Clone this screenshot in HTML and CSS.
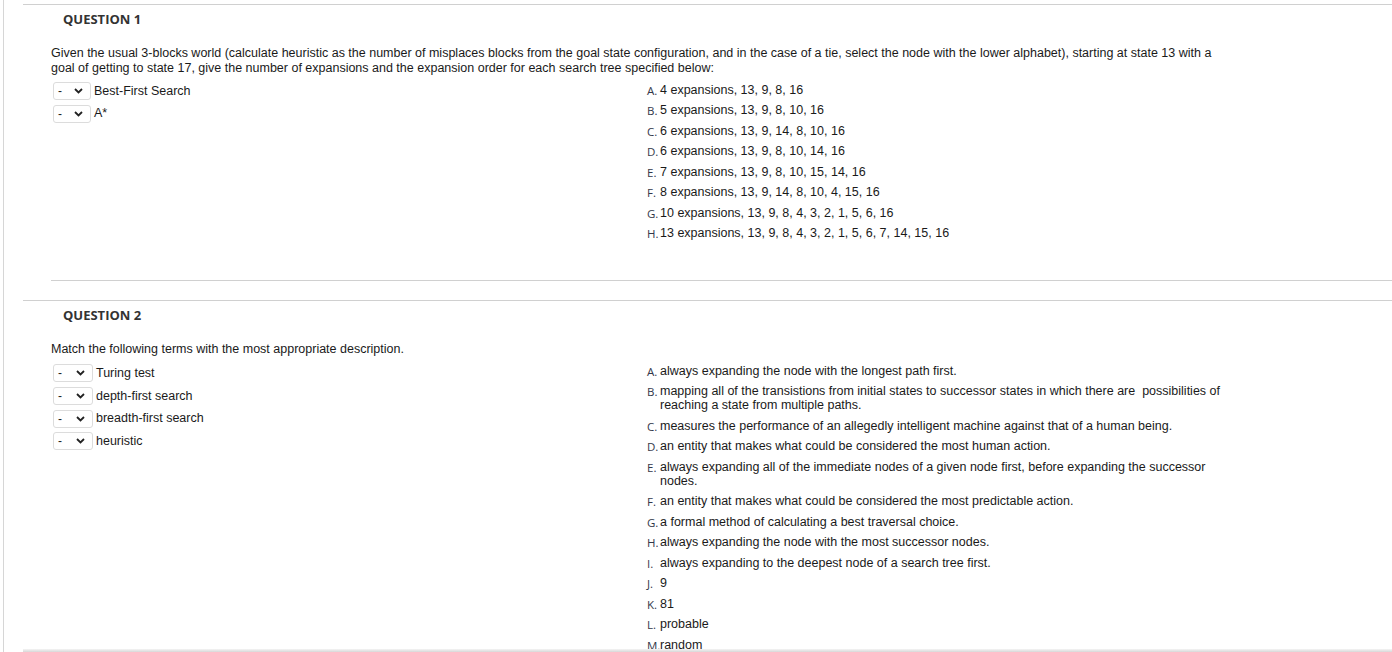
FILE: index.html
```html
<!DOCTYPE html>
<html>
<head>
<meta charset="utf-8">
<link rel="stylesheet" href="styles.css">
</head>
<body>
<div class="frame">
  <div class="content">
    <section class="question">
      <h3 class="q-title">QUESTION 1</h3>
      <div class="q-body">
        <p class="q-text">Given the usual 3-blocks world (calculate heuristic as the number of misplaces blocks from the goal state configuration, and in the case of a tie, select the node with the lower alphabet), starting at state 13 with a goal of getting to state 17, give the number of expansions and the expansion order for each search tree specified below:</p>
        <div class="match">
          <div class="terms">
            <div class="term"><span class="sel"><span>-</span><svg width="9" height="6" viewBox="0 0 9 6"><path d="M1 1 L4.5 4.5 L8 1" fill="none" stroke="#222" stroke-width="1.8"/></svg></span><span class="term-label">Best-First Search</span></div>
            <div class="term"><span class="sel"><span>-</span><svg width="9" height="6" viewBox="0 0 9 6"><path d="M1 1 L4.5 4.5 L8 1" fill="none" stroke="#222" stroke-width="1.8"/></svg></span><span class="term-label">A*</span></div>
          </div>
          <ol class="answers">
            <li><span class="let">A.</span><span class="ans">4 expansions, 13, 9, 8, 16</span></li>
            <li><span class="let">B.</span><span class="ans">5 expansions, 13, 9, 8, 10, 16</span></li>
            <li><span class="let">C.</span><span class="ans">6 expansions, 13, 9, 14, 8, 10, 16</span></li>
            <li><span class="let">D.</span><span class="ans">6 expansions, 13, 9, 8, 10, 14, 16</span></li>
            <li><span class="let">E.</span><span class="ans">7 expansions, 13, 9, 8, 10, 15, 14, 16</span></li>
            <li><span class="let">F.</span><span class="ans">8 expansions, 13, 9, 14, 8, 10, 4, 15, 16</span></li>
            <li><span class="let">G.</span><span class="ans">10 expansions, 13, 9, 8, 4, 3, 2, 1, 5, 6, 16</span></li>
            <li><span class="let">H.</span><span class="ans">13 expansions, 13, 9, 8, 4, 3, 2, 1, 5, 6, 7, 14, 15, 16</span></li>
          </ol>
        </div>
        <hr class="sep">
      </div>
    </section>
    <section class="question">
      <h3 class="q-title">QUESTION 2</h3>
      <div class="q-body">
        <p class="q-text">Match the following terms with the most appropriate description.</p>
        <div class="match">
          <div class="terms terms-q2">
            <div class="term"><span class="sel sel-wide"><span>-</span><svg width="9" height="6" viewBox="0 0 9 6"><path d="M1 1 L4.5 4.5 L8 1" fill="none" stroke="#222" stroke-width="1.8"/></svg></span><span class="term-label">Turing test</span></div>
            <div class="term"><span class="sel sel-wide"><span>-</span><svg width="9" height="6" viewBox="0 0 9 6"><path d="M1 1 L4.5 4.5 L8 1" fill="none" stroke="#222" stroke-width="1.8"/></svg></span><span class="term-label">depth-first search</span></div>
            <div class="term"><span class="sel sel-wide"><span>-</span><svg width="9" height="6" viewBox="0 0 9 6"><path d="M1 1 L4.5 4.5 L8 1" fill="none" stroke="#222" stroke-width="1.8"/></svg></span><span class="term-label">breadth-first search</span></div>
            <div class="term"><span class="sel sel-wide"><span>-</span><svg width="9" height="6" viewBox="0 0 9 6"><path d="M1 1 L4.5 4.5 L8 1" fill="none" stroke="#222" stroke-width="1.8"/></svg></span><span class="term-label">heuristic</span></div>
          </div>
          <ol class="answers">
            <li><span class="let">A.</span><span class="ans">always expanding the node with the longest path first.</span></li>
            <li><span class="let">B.</span><span class="ans">mapping all of the transistions from initial states to successor states in which there are &nbsp;possibilities of reaching a state from multiple paths.</span></li>
            <li><span class="let">C.</span><span class="ans">measures the performance of an allegedly intelligent machine against that of a human being.</span></li>
            <li><span class="let">D.</span><span class="ans">an entity that makes what could be considered the most human action.</span></li>
            <li><span class="let">E.</span><span class="ans">always expanding all of the immediate nodes of a given node first, before expanding the successor nodes.</span></li>
            <li><span class="let">F.</span><span class="ans">an entity that makes what could be considered the most predictable action.</span></li>
            <li><span class="let">G.</span><span class="ans">a formal method of calculating a best traversal choice.</span></li>
            <li><span class="let">H.</span><span class="ans">always expanding the node with the most successor nodes.</span></li>
            <li><span class="let">I.</span><span class="ans">always expanding to the deepest node of a search tree first.</span></li>
            <li><span class="let">J.</span><span class="ans">9</span></li>
            <li><span class="let">K.</span><span class="ans">81</span></li>
            <li><span class="let">L.</span><span class="ans">probable</span></li>
            <li><span class="let">M.</span><span class="ans">random</span></li>
          </ol>
        </div>
      </div>
    </section>
  </div>
</div>
<div class="bottom-shadow"></div>
</body>
</html>
```
FILE: styles.css
```css
html, body {
  margin: 0;
  padding: 0;
  background: #fff;
}
body {
  font-family: "Liberation Sans", Arial, sans-serif;
  font-size: 12.5px;
  color: #1a1a1a;
}
.frame {
  margin-left: 3px;
  border-left: 1px solid #d6d6d6;
  min-height: 100vh;
}
.content {
  margin-left: 19px;
  padding-top: 4px;
}
.question {
  border-top: 1px solid #d0d0d0;
}
.q-title {
  margin: 0;
  padding: 5px 0 0 40px;
  font-family: "Open Sans", sans-serif;
  font-weight: 700;
  font-size: 13px;
  line-height: 18px;
  color: #333;
}
.q-body {
  padding-left: 28px;
}
.q-text {
  margin: 18px 0 0 0;
  width: 1181px;
  line-height: 15px;
}
.match {
  display: grid;
  grid-template-columns: 596px 585px;
  margin-top: 4px;
}
.terms {
  display: flex;
  flex-direction: column;
  padding-left: 2px;
}
.term {
  display: flex;
  align-items: center;
  height: 22.5px;
  gap: 3px;
}
.terms-q2 {
  padding-top: 1px;
}
.terms-q2 .term {
  height: 22.7px;
}
.sel {
  box-sizing: border-box;
  display: inline-flex;
  align-items: center;
  justify-content: space-between;
  width: 38px;
  height: 18px;
  padding: 0 7px 0 4px;
  border: 1px solid #dcdcdc;
  border-radius: 3px;
  background: #fff;
  color: #222;
  font-size: 12px;
}
.sel-wide {
  width: 40px;
}
.term-label {
  line-height: 15px;
}
.answers {
  list-style: none;
  margin: 0;
  padding: 0;
}
.answers li {
  display: grid;
  grid-template-columns: 13px 1fr;
  padding: 2.5px 0 4px 0;
  line-height: 14px;
}
.let {
  font-family: "Open Sans", sans-serif;
  font-size: 11.5px;
  color: #33384a;
  padding-top: 2px;
  line-height: 12px;
}
.ans {
  width: 565px;
}
.sep {
  margin: 36px 0 19px 0;
  border: 0;
  border-top: 1px solid #d0d0d0;
  height: 0;
}
.bottom-shadow {
  position: fixed;
  left: 23px;
  right: 0;
  bottom: 0;
  height: 3px;
  background: linear-gradient(#f4f4f4, #d8d8d8);
}
```
